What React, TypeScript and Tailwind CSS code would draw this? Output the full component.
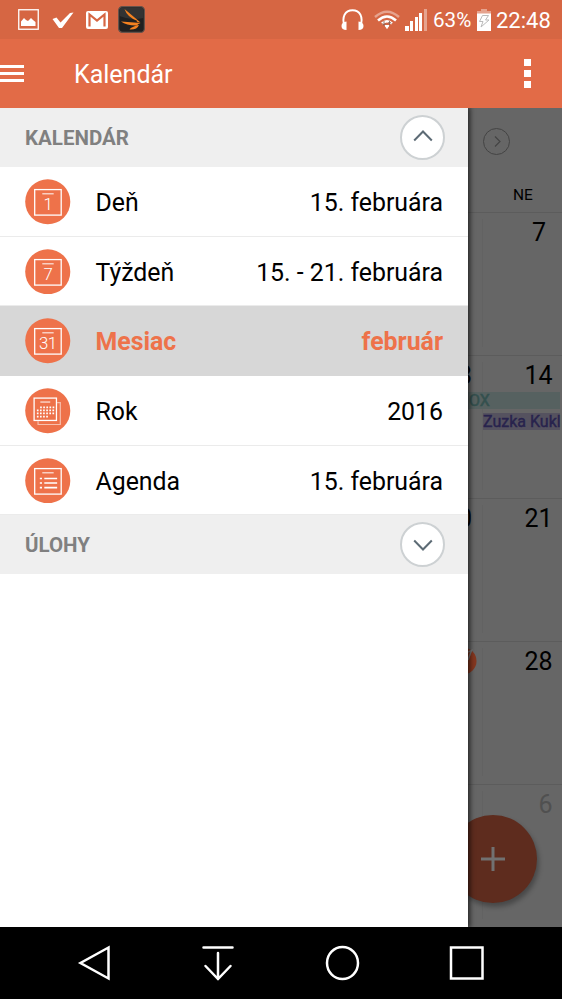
import React, { useState } from 'react';
import clsx from 'clsx';

type View = 'day' | 'week' | 'month' | 'year' | 'agenda';

interface MenuItem {
  view: View;
  label: string;
  value: string;
}

const menuItems: MenuItem[] = [
  { view: 'day', label: 'Deň', value: '15. februára' },
  { view: 'week', label: 'Týždeň', value: '15. - 21. februára' },
  { view: 'month', label: 'Mesiac', value: 'február' },
  { view: 'year', label: 'Rok', value: '2016' },
  { view: 'agenda', label: 'Agenda', value: '15. februára' },
];

const weeks = [
  { previous: '', day: '7' },
  { previous: '13', day: '14' },
  { previous: '20', day: '21' },
  { previous: '', day: '28' },
  { previous: '', day: '6' },
];

const StatusBar: React.FC = () => (
  <div className="flex h-[39px] shrink-0 items-center justify-between bg-[#d66643] pl-[18px] pr-[11px] text-white">
    <div className="flex items-center">
      <svg className="h-[21px] w-[21px]" viewBox="0 0 21 21" fill="none">
        <rect x="0.75" y="0.75" width="19.5" height="19.5" stroke="currentColor" strokeWidth="1.3" />
        <path d="M3 17v-4.500l3-3.500 2 2 2 1 3-3 2 2 2.500 2v4z" fill="currentColor" />
      </svg>
      <svg className="ml-[13px] mt-[2px] h-[18px] w-[22px]" viewBox="0 0 22 18">
        <path d="M0.500 7L4.500 5.500 8.500 10.500 18 1l3.500-.5L10 16H7z" fill="currentColor" />
      </svg>
      <svg className="ml-3 h-[18px] w-[22px]" viewBox="0 0 22 18">
        <rect width="22" height="18" rx="2" fill="currentColor" />
        <path d="M3.500 15.500V3.500L11 9.500l7.500-6v12" fill="none" stroke="#d66643" strokeWidth="2.200" />
      </svg>
      <svg className="ml-[10px] h-[27px] w-[27px]" viewBox="0 0 27 27">
        <rect x="0.6" y="0.6" width="25.800" height="25.800" rx="4" fill="#202020" stroke="#66534b" strokeWidth="1.200" />
        <path d="M1.500 10V4q0-2.500 2.500-2.500h19q2.500 0 2.500 2.500v8q-12 3-24-2z" fill="#333" />
        <path d="M6.500 3L22.500 16.500l-4-.5 1-1Q9 11 6.500 3z" fill="#f58220" />
        <path d="M3 15.500L22.500 17l-3 1.500.5 1Q9 20 3 15.500z" fill="#f58220" />
        <path d="M11.500 23.500q2-3 9.500-4.500-2 5-9.500 4.500z" fill="#f58220" />
      </svg>
    </div>
    <div className="flex items-center text-[22px] leading-none">
      <svg className="h-[22px] w-[23px]" viewBox="0 0 23 22" fill="none">
        <path d="M3.500 17C.5 8 4 1.200 11.500 1.200S22.500 8 19.500 17" stroke="currentColor" strokeWidth="1.900" />
        <path d="M5.500 12.500v8.500q-5 0-5-4t5-4.500zM17.500 12.500v8.500q5 0 5-4t-5-4.500z" fill="currentColor" />
      </svg>
      <svg className="ml-[10px] h-5 w-[26px]" viewBox="0 0 26 20" fill="none" stroke="currentColor">
        <path d="M1 7Q13-3.500 25 7" strokeWidth="2.400" opacity="0.400" />
        <path d="M4 10.500Q13 2.500 22 10.500" strokeWidth="2.600" />
        <path d="M8 13.500Q13 9 18 13.500" strokeWidth="2.500" />
        <path d="M11 15.500h4l-2 3z" fill="currentColor" strokeWidth="1" />
        <path d="M10 11v4m-1.500-1.500l1.500 2 1.500-2M15.500 15.500v-4m-1.500 2l1.500-2 1.500 2" stroke="#8c6254" strokeWidth="0.900" />
      </svg>
      <svg className="ml-[5px] h-[22px] w-[22px]" viewBox="0 0 22 22" fill="currentColor">
        <path d="M0 17h4v5H0zM5 12h3v10H5zM10 8h3v14h-3zM14 4h3v18h-3z" />
        <path d="M19 0h3v22h-3z" opacity="0.400" />
      </svg>
      <span className="ml-[6px] w-[38px] whitespace-nowrap pt-[2px] text-[20.600px]">63%</span>
      <svg className="ml-[6px] mr-px h-[22px] w-[14px]" viewBox="0 0 14 22">
        <path d="M0 5V2h4V0h6v2h4v3z" fill="currentColor" opacity="0.400" />
        <path d="M0 4.500h14V22H0z" fill="currentColor" />
        <path d="M5.500 6.500h6L8.500 11H12L4 18l2-5.500H2.500z" fill="#fff" stroke="#bbb" strokeWidth="1" />
      </svg>
      <span className="ml-[4px] w-[55px] whitespace-nowrap pt-[2px] text-[22px]">22:48</span>
    </div>
  </div>
);

const AppBar: React.FC<{ onMenuClick: () => void }> = ({ onMenuClick }) => (
  <header className="flex h-[69px] shrink-0 items-center justify-between bg-[#e26b47] pr-[31px] text-white">
    <div className="flex items-center">
      <button onClick={onMenuClick} className="flex w-6 flex-col gap-1" aria-label="Menu">
        <span className="h-[3px] bg-white" />
        <span className="h-[3px] bg-white" />
        <span className="h-[3px] bg-white" />
      </button>
      <h1 className="ml-[50px] pt-[3px] text-[25px] leading-8">Kalendár</h1>
    </div>
    <button className="flex w-[7px] flex-col gap-1" aria-label="Viac">
      <span className="h-[7px] bg-white" />
      <span className="h-[7px] bg-white" />
      <span className="h-[7px] bg-white" />
    </button>
  </header>
);

const ViewIcon: React.FC<{ view: View }> = ({ view }) => (
  <svg className="mt-px h-[45.500px] w-[45.500px] shrink-0" viewBox="0 0 46 46" fill="none">
    <circle cx="23" cy="23" r="22.800" fill="#ee724a" />
    {view === 'year' ? (
      <>
        <path d="M32.500 14.700h3.200v22.200H13.200v-3.200" stroke="#fff" strokeWidth="1.200" opacity="0.550" />
        <rect x="9.200" y="10.200" width="22.600" height="22.600" stroke="#fff" strokeWidth="1.300" />
        <path d="M15.500 14.200h10" stroke="#fff" strokeWidth="1" />
        <path d="M15.300 19.500h14.500M12 22.600h17.800M12 25.700h17.800M12 28.900h11.500" stroke="#fff" strokeWidth="1.700" strokeDasharray="1.700 1.450" />
      </>
    ) : (
      <>
        <rect x="9.800" y="10.700" width="26.800" height="25.800" stroke="#fff" strokeWidth="1.300" />
        <path d="M17.500 15h11.500" stroke="#fff" strokeWidth="1" />
      </>
    )}
    {view === 'agenda' && (
      <path d="M15 20.700h2.200M15 25.300h2.200M15 30h2.200M19.500 20.700h13M19.500 25.300h13M19.500 30h13" stroke="#fff" strokeWidth="1.700" />
    )}
    {(view === 'day' || view === 'week' || view === 'month') && (
      <text x="23" y="31.500" fill="#fff" fontSize="17" fontWeight="300" textAnchor="middle" letterSpacing="-0.600">
        {view === 'day' ? '1' : view === 'week' ? '7' : '31'}
      </text>
    )}
  </svg>
);

interface SectionHeaderProps {
  title: string;
  isOpen: boolean;
  onToggle: () => void;
}

const SectionHeader: React.FC<SectionHeaderProps> = ({ title, isOpen, onToggle }) => (
  <div className="flex h-[59px] items-center justify-between bg-[#efefef] pl-[25px] pr-[23px]">
    <h2 className="pt-px text-[20.500px] font-bold leading-6 text-[#808080]">{title}</h2>
    <button
      onClick={onToggle}
      className="flex h-[45px] w-[45px] items-center justify-center rounded-full border-2 border-[#cdd1d3] bg-white"
      aria-label={title}
    >
      <svg className={clsx('h-[12px] w-5', isOpen ? 'mb-[3px]' : 'mt-px rotate-180')} viewBox="0 0 20 12" fill="none">
        <path d="M1.200 10.500L10 1.500l8.800 9" stroke="#5d6b75" strokeWidth="2" />
      </svg>
    </button>
  </div>
);

const CalendarStrip: React.FC = () => (
  <main className="flex min-w-0 flex-1 flex-col overflow-hidden bg-[#666] text-black">
    <div className="flex h-[69px] shrink-0 items-center pl-[15px]">
      <svg className="mb-[2px] h-7 w-7" viewBox="0 0 28 28" fill="none" stroke="#444">
        <circle cx="13.500" cy="13.500" r="13" strokeWidth="1" />
        <path d="M12 8.500l5 5-5 5" strokeWidth="1.200" />
      </svg>
    </div>
    <div className="flex h-[35px] shrink-0 justify-end">
      <span className="w-[78px] pt-[8px] text-center text-[15.500px] leading-5">NE</span>
    </div>
    {weeks.map(({ previous, day }) => (
      <div key={day} className="relative h-[143px] shrink-0 border-t border-[#5c5c5c]">
        <div className="absolute bottom-2 left-[14px] top-1.5 w-px bg-[#626262]" />
        <div className="flex h-[36px] pt-1">
          <div className="flex w-[14px] justify-end overflow-hidden pr-[10px] text-[25px] leading-8">
            {previous && <span>{previous}</span>}
          </div>
          <div className={clsx('flex-1 text-right text-[25px] leading-8', day === '6' && 'text-[#505050]', day === '7' ? 'pr-[16px]' : 'pr-[9.500px]')}>
            {day}
          </div>
        </div>
        {day === '14' && (
          <div className="relative flex flex-col gap-[4px] pr-[2px] text-[16px] leading-[18px]">
            <div className="h-[17px] bg-[#566160] pl-px text-[#34504e] [-webkit-text-stroke:0.500px_#34504e]">OX</div>
            <div className="ml-[15px] h-[17px] whitespace-nowrap bg-[#55525f] text-[#28234d] [-webkit-text-stroke:0.400px_#28234d]">Zuzka Kukl</div>
          </div>
        )}
        {day === '28' && (
          <svg className="absolute left-0 top-[5px] h-7 w-[9px]" viewBox="0 0 9 28">
            <circle cx="-5" cy="14" r="13.500" fill="#84371f" />
            <path d="M0 5l3.500-1.500L0 13" fill="none" stroke="#777" strokeWidth="1.500" />
          </svg>
        )}
        {day === '6' && (
          <div className="absolute left-[-19px] top-[30px] flex h-[88px] w-[88px] items-center justify-center rounded-full bg-[#5e2c1e] shadow-[2px_4px_5px_rgba(0,0,0,0.300)]">
            <svg className="h-6 w-6" viewBox="0 0 24 24">
              <path d="M12 0v24M0 12h24" stroke="#717171" strokeWidth="3" />
            </svg>
          </div>
        )}
      </div>
    ))}
  </main>
);

const NavigationBar: React.FC = () => (
  <nav className="h-[72px] shrink-0 bg-black text-white">
    <svg className="h-[72px] w-[562px]" viewBox="0 0 562 72" fill="none" stroke="currentColor" strokeWidth="2.500">
      <path d="M108.500 20.500v31L80.500 36z" />
      <path d="M189 20.500h29M203.500 26v26M191 39l12.500 13L216 39" strokeLinecap="round" transform="translate(14.500 0)" />
      <ellipse cx="342.500" cy="36" rx="15.500" ry="16" />
      <rect x="451" y="20.500" width="31.500" height="31" />
    </svg>
  </nav>
);

const App: React.FC = () => {
  const [activeView, setActiveView] = useState<View>('month');
  const [isDrawerOpen, setIsDrawerOpen] = useState(true);
  const [isCalendarOpen, setIsCalendarOpen] = useState(true);
  const [isTasksOpen, setIsTasksOpen] = useState(false);

  return (
    <div className="flex h-[999px] w-[562px] flex-col overflow-hidden bg-white font-[Roboto,sans-serif]">
      <StatusBar />
      <AppBar onMenuClick={() => setIsDrawerOpen(!isDrawerOpen)} />
      <div className="flex h-[819px] shrink-0 overflow-hidden">
        {isDrawerOpen && (
          <aside className="relative z-10 w-[468px] shrink-0 bg-white shadow-[1px_0_5px_1px_rgba(0,0,0,0.650)]">
            <SectionHeader title="KALENDÁR" isOpen={isCalendarOpen} onToggle={() => setIsCalendarOpen(!isCalendarOpen)} />
            {isCalendarOpen &&
              menuItems.map(({ view, label, value }) => (
                <button
                  key={view}
                  onClick={() => setActiveView(view)}
                  className={clsx(
                    'flex h-[69.700px] w-full items-center border-b pl-[25px] pr-[25px] text-[24.850px] leading-8',
                    activeView === view
                      ? 'border-[#d7d7d7] bg-[#d7d7d7] font-bold text-[#ee724a]'
                      : 'border-[#ebebeb] text-black'
                  )}
                >
                  <ViewIcon view={view} />
                  <span className="ml-[25px] pt-[3.500px]">{label}</span>
                  <span className="ml-auto pt-[3.500px]">{value}</span>
                </button>
              ))}
            <SectionHeader title="ÚLOHY" isOpen={isTasksOpen} onToggle={() => setIsTasksOpen(!isTasksOpen)} />
          </aside>
        )}
        <CalendarStrip />
      </div>
      <NavigationBar />
    </div>
  );
};

export default App;
